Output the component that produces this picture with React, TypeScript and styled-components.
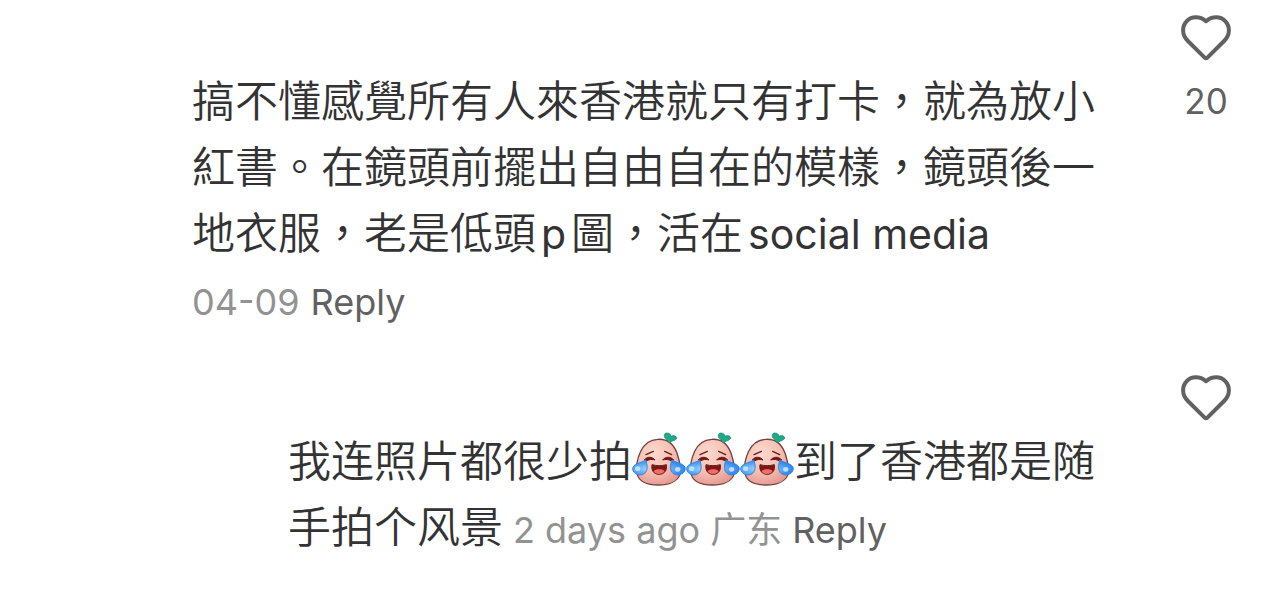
import React from "react";
import styled, { createGlobalStyle } from "styled-components";

const GlobalStyle = createGlobalStyle`
  body {
    margin: 0;
    background: #fff;
    color: #333;
    font-family: Inter, "Noto Sans CJK TC", sans-serif;
  }
`;

const Thread = styled.main`
  display: flex;
  flex-direction: column;
  gap: 21px;
`;

const Comment = styled.article<{ $reply?: boolean }>`
  display: flex;
  align-items: flex-start;
  gap: 64px;
  padding-left: ${(p) => (p.$reply ? 288 : 192)}px;
  padding-right: 53px;
`;

const Body = styled.div`
  flex: 1;
  min-width: 0;
  padding-top: 65px;
`;

const Text = styled.p`
  margin: 0;
  font-family: "Noto Sans CJK TC", sans-serif;
  font-size: 43px;
  font-weight: 350;
  line-height: 66px;
  text-spacing-trim: space-all;

  &:lang(zh-Hans) {
    font-family: "Noto Sans CJK SC", sans-serif;
  }
`;

const Latin = styled.span`
  margin-left: 5px;
  font-family: Inter, sans-serif;
  font-size: 41px;
  font-weight: 400;
  line-height: 1;

  &:not(:last-child) {
    margin-right: 5px;
  }
`;

const Meta = styled.div`
  display: flex;
  gap: 11px;
  margin-top: 3px;
  padding-bottom: 1px;
  font-size: 36px;
  line-height: 72px;
  color: #929292;
`;

const InlineMeta = styled.span`
  display: inline-flex;
  gap: 10px;
  margin-left: 10px;
  font-family: Inter, "Noto Sans CJK SC", sans-serif;
  font-size: 36px;
  font-weight: 400;
  line-height: 1;
  color: #929292;
`;

const ReplyButton = styled.button`
  padding: 0;
  border: 0;
  background: none;
  color: #616161;
  font: inherit;
  cursor: pointer;
`;

const LikeButton = styled.button`
  display: flex;
  flex: none;
  flex-direction: column;
  align-items: center;
  gap: 20px;
  width: 50px;
  padding: 15px 0 0;
  border: 0;
  background: none;
  color: #616161;
  font-family: Inter, sans-serif;
  font-size: 35px;
  line-height: 40px;
  cursor: pointer;
`;

const HeartIcon = styled.svg`
  display: block;
  width: 50px;
  height: 46px;
`;

const EmojiIcon = styled.svg`
  width: 54px;
  height: 54px;
  vertical-align: -9px;
`;

function Like({ count }: { count?: number }) {
  return (
    <LikeButton aria-label={count ? `Like, ${count}` : "Like"}>
      <HeartIcon viewBox="0 0 50 46" fill="none" aria-hidden="true">
        <path
          d="M25 6.2C21.8 3.4 18.4 2.3 14.8 2.3C7.6 2.3 2.1 8 2.1 15.2C2.1 19.4 3.9 23 6.9 26L23.4 42.4Q25 44 26.6 42.4L43.1 26C46.1 23 47.9 19.4 47.9 15.2C47.9 8 42.4 2.3 35.2 2.3C31.6 2.3 28.2 3.4 25 6.2Z"
          stroke="#616161"
          strokeWidth="4"
          strokeLinejoin="round"
        />
      </HeartIcon>
      {count}
    </LikeButton>
  );
}

function PotatoTears() {
  return (
    <EmojiIcon viewBox="9 9 162 162" role="img" aria-label="laughing with tears">
      <defs>
        <radialGradient id="skin" cx="0.4" cy="0.3" r="0.75">
          <stop offset="0" stopColor="#fbdacf" />
          <stop offset="0.6" stopColor="#f5bcb0" />
          <stop offset="1" stopColor="#e6968e" />
        </radialGradient>
        <radialGradient id="tear" cx="0.4" cy="0.6" r="0.6">
          <stop offset="0" stopColor="#b5e2ff" />
          <stop offset="0.5" stopColor="#69b4fa" />
          <stop offset="1" stopColor="#3187ea" />
        </radialGradient>
      </defs>
      <path
        d="M86 31C114 29 134 46 144 72C152 97 158 119 153 136C146 158 119 168 88 168C57 168 31 159 25 137C20 118 24 91 35 67C45 46 61 32 86 31Z"
        fill="url(#skin)"
        stroke="#74423f"
        strokeWidth="4"
      />
      <path
        d="M115 34C105 27 103 19 109 13C117 10 125 14 127 22C132 18 140 19 144 27C139 33 134 37 128 36C127 41 122 43 118 40Z"
        fill="#20a987"
        stroke="#168468"
        strokeWidth="2"
      />
      <path d="M51 77L73 67M107 67L128 77" stroke="#67201d" strokeWidth="4" strokeLinecap="round" />
      <path
        d="M46 93C53 82 70 82 78 93C69 90 60 91 53 96ZM101 93C109 82 126 82 134 93L127 96C120 91 110 90 101 93Z"
        fill="#751814"
        stroke="#751814"
        strokeWidth="3"
        strokeLinejoin="round"
      />
      <path
        d="M69 107C83 111 98 111 112 107C115 123 107 136 90 136C74 136 66 123 69 107Z"
        fill="#7d1714"
        stroke="#65201b"
        strokeWidth="3"
      />
      <path d="M74 126C81 119 101 119 107 126C103 133 98 135 90 135C82 135 77 133 74 126Z" fill="#f66b69" />
      <path
        d="M50 93C56 107 57 124 47 133C36 142 13 138 11 120C11 103 36 103 50 93ZM129 93C123 107 122 124 132 133C143 142 166 138 169 120C169 103 143 103 129 93Z"
        fill="url(#tear)"
        stroke="#3187ea"
        strokeWidth="3"
      />
      <ellipse cx="26" cy="119" rx="8" ry="7" fill="#b9e1ff" />
      <ellipse cx="146" cy="121" rx="8" ry="7" fill="#b9e1ff" />
    </EmojiIcon>
  );
}

export default function App() {
  return (
    <>
      <GlobalStyle />
      <Thread>
        <Comment>
          <Body>
            <Text lang="zh-Hant">
              搞不懂感覺所有人來香港就只有打卡，就為放小紅書。在鏡頭前擺出自由自在的模樣，鏡頭後一地衣服，老是低頭
              <Latin>p</Latin>圖，活在<Latin>social media</Latin>
            </Text>
            <Meta>
              <time>04-09</time>
              <ReplyButton>Reply</ReplyButton>
            </Meta>
          </Body>
          <Like count={20} />
        </Comment>
        <Comment $reply>
          <Body>
            <Text lang="zh-Hans">
              我连照片都很少拍
              <PotatoTears />
              <PotatoTears />
              <PotatoTears />
              到了香港都是随手拍个风景
              <InlineMeta>
                <span>2 days ago 广东</span>
                <ReplyButton>Reply</ReplyButton>
              </InlineMeta>
            </Text>
          </Body>
          <Like />
        </Comment>
      </Thread>
    </>
  );
}
